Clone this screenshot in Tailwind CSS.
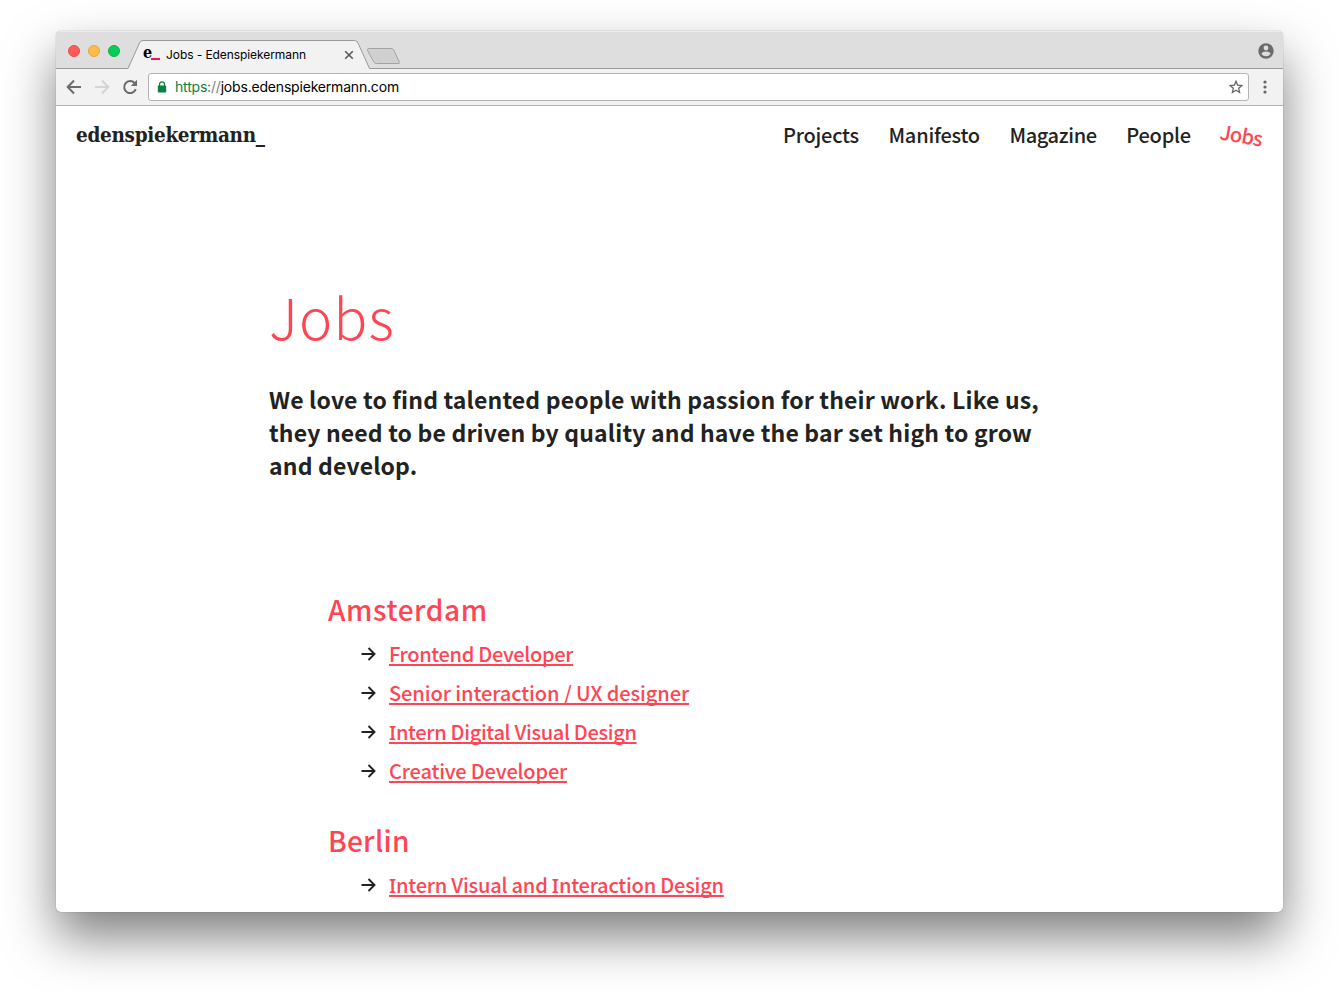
<!DOCTYPE html>
<html lang="en">
<head>
<meta charset="utf-8">
<title>Jobs - Edenspiekermann</title>
<script src="https://cdn.jsdelivr.net/npm/@tailwindcss/browser@4"></script>
</head>
<body class="h-[992px] overflow-hidden bg-white pt-[31px] pl-14">
<div class="flex h-[881px] w-[1227px] flex-col overflow-hidden rounded-[5px] bg-white shadow-[0_0_1px_rgba(0,0,0,0.55),0_25px_50px_rgba(0,0,0,0.5)]">
  <!-- Tab strip -->
  <div class="relative flex h-[38px] shrink-0 items-center bg-[#dedede] pt-0.5">
    <svg class="absolute inset-0" width="1227" height="38" fill="none">
      <path d="M0 .5H1227" stroke="#ececec"/>
      <path d="M72 38L83.5 12Q84.600 9.500 87 9.500H298.500Q301 9.500 302 12L313.500 38Z" fill="#f2f2f2"/>
      <path d="M0 37.500H72L83.500 12Q84.600 9.500 87 9.500H298.500Q301 9.500 302 12L313.500 37.500H1227" stroke="#999"/>
      <path d="M313 17.500H335Q337 17.500 338 19.500L343.500 31.500Q344 32.500 342 32.500H320.500Q318.500 32.500 317.500 30.500L311.500 19.500Q311 17.500 313 17.500Z" fill="#d0d0d0" stroke="#a3a3a3"/>
    </svg>
    <div class="relative flex gap-2 pl-3">
      <i class="size-3 rounded-full border border-[#e94b48] bg-[#fc5b57]"></i>
      <i class="size-3 rounded-full border border-[#e8a53c] bg-[#fdbc4a]"></i>
      <i class="size-3 rounded-full border border-[#06b34a] bg-[#05cd57]"></i>
    </div>
    <div class="relative ml-[23px] flex h-5 w-[17px] items-center pt-1 text-[16px] leading-5 font-bold text-black" style="font-family:'DejaVu Serif Condensed','DejaVu Serif',serif"><span class="w-2 shrink-0">e</span><span class="mt-[12px] h-[2px] w-[9px] shrink-0 bg-[#f0145a]"></span></div>
    <div class="relative mt-[7px] ml-[6px] w-[178px] text-[12px] tracking-[-0.08px] whitespace-nowrap text-black" style="font-family:Inter,sans-serif">Jobs - Edenspiekermann</div>
    <svg class="relative mt-[7px]" width="10" height="10" stroke="#5a5a5a" stroke-width="1.6"><path d="M1.200 1.200L8.800 8.800M8.800 1.200L1.200 8.800"/></svg>
    <svg class="relative mr-[9px] ml-auto" width="16" height="16"><circle cx="8" cy="8" r="7.700" fill="#6b6b6b"/><circle cx="8" cy="5" r="2.400" fill="#dedede"/><path d="M3.300 10.700Q4.500 8.600 8 8.600T12.700 10.700Q11 13.300 8 13.300T3.300 10.700Z" fill="#dedede"/></svg>
  </div>
  <!-- Toolbar -->
  <div class="flex h-[37px] shrink-0 items-center border-b border-[#b4b4b4] bg-[#f2f2f2]">
    <svg class="ml-[10px]" width="16" height="16" fill="none" stroke="#6b6b6b" stroke-width="2"><path d="M15 8H2M8 1.500L1.700 8L8 14.500"/></svg>
    <svg class="ml-3" width="16" height="16" fill="none" stroke="#d4d4d4" stroke-width="2"><path d="M1 8H14M8 1.500L14.300 8L8 14.500"/></svg>
    <svg class="ml-3" width="16" height="16" fill="none" stroke="#6b6b6b" stroke-width="2"><path d="M13.800 10.200A6 6 0 1 1 12.600 4"/><path d="M15 .8V7H8.800Z" fill="#6b6b6b" stroke="none"/></svg>
    <div class="ml-[10px] flex h-7 w-[1101px] items-center rounded-[3px] border border-[#b4b4b4] bg-white">
      <svg class="ml-[8px]" width="10" height="12" viewBox="0 0 10 12"><rect x=".8" y="4.500" width="8.400" height="7" rx=".8" fill="#0b8043"/><path d="M2.600 5V3.200a2.400 2.400 0 0 1 4.800 0V5" fill="none" stroke="#0b8043" stroke-width="1.300"/></svg>
      <div class="ml-[8px] text-[14px] leading-5 tracking-[-0.19px] whitespace-nowrap text-black" style="font-family:Inter,sans-serif"><span class="text-[#0b8043]">https:</span><span class="text-[#808080]">//</span>jobs.edenspiekermann.com</div>
      <svg class="mr-[5px] ml-auto" width="14" height="14" viewBox="0 0 14 14" fill="none" stroke="#666" stroke-width="1.300"><path d="M7 1.300L8.600 5.100L12.900 5.500L9.700 8.300L10.600 12.500L7 10.300L3.400 12.500L4.300 8.300L1.100 5.500L5.400 5.100Z"/></svg>
    </div>
    <svg class="ml-[14px]" width="4" height="14" fill="#666"><circle cx="2" cy="2" r="1.600"/><circle cx="2" cy="7" r="1.600"/><circle cx="2" cy="12" r="1.600"/></svg>
  </div>
  <!-- Page -->
  <div class="flex-1 text-[#222]" style="font-family:'Noto Sans CJK SC',sans-serif">
    <header class="flex h-[58px] items-center justify-between pr-5 pl-5">
      <a class="text-[20.5px] leading-6 font-bold" style="font-family:'DejaVu Serif Condensed','DejaVu Serif',serif"><span class="tracking-[-0.3px]">edenspiekermann_</span></a>
      <nav class="flex gap-[29.5px] text-[20px] leading-7 font-medium tracking-[-0.22px]">
        <a>Projects</a><a>Manifesto</a><a class="tracking-[-0.35px]">Magazine</a><a>People</a><a class="rotate-[10deg] tracking-[-0.7px] text-[#ff4553]">Jobs</a>
      </nav>
    </header>
    <main class="pl-[213px]">
      <h1 class="mt-[117px] text-[56px] leading-[70px] font-light tracking-[1.2px] text-[#ff4553]">Jobs</h1>
      <p class="mt-[32px] text-[23px] leading-[33px] font-bold tracking-[0.16px] whitespace-nowrap">We love to find talented people with passion for their work. Like us,<br>they need to be driven by quality and have the bar set high to grow<br>and develop.</p>
      <section class="mt-[109px] pl-[59px]">
        <h2 class="text-[28px] leading-9 font-medium tracking-[0.6px] text-[#ff4553]">Amsterdam</h2>
        <ul class="mt-[7px] ml-[33px] text-[20px] leading-[39px] font-medium text-[#ff4553]">
          <li class="flex h-[39px] items-center gap-[13px]"><svg class="text-[#222]" width="15" height="14" fill="none" stroke="currentColor" stroke-width="1.900"><path d="M.5 7H13.500M7.500 1L13.500 7L7.500 13"/></svg><a class="tracking-[-0.32px] underline decoration-2 underline-offset-[2px] [text-decoration-skip-ink:none]">Frontend Developer</a></li>
          <li class="flex h-[39px] items-center gap-[13px]"><svg class="text-[#222]" width="15" height="14" fill="none" stroke="currentColor" stroke-width="1.900"><path d="M.5 7H13.500M7.500 1L13.500 7L7.500 13"/></svg><a class="tracking-[-0.06px] underline decoration-2 underline-offset-[2px] [text-decoration-skip-ink:none]">Senior interaction / UX designer</a></li>
          <li class="flex h-[39px] items-center gap-[13px]"><svg class="text-[#222]" width="15" height="14" fill="none" stroke="currentColor" stroke-width="1.900"><path d="M.5 7H13.500M7.500 1L13.500 7L7.500 13"/></svg><a class="tracking-[-0.32px] underline decoration-2 underline-offset-[2px] [text-decoration-skip-ink:none]"><span style="font-family:'Open Sans';font-weight:600;font-feature-settings:'ss01','salt'">I</span>ntern Digital Visual Design</a></li>
          <li class="flex h-[39px] items-center gap-[13px]"><svg class="text-[#222]" width="15" height="14" fill="none" stroke="currentColor" stroke-width="1.900"><path d="M.5 7H13.500M7.500 1L13.500 7L7.500 13"/></svg><a class="tracking-[-0.17px] underline decoration-2 underline-offset-[2px] [text-decoration-skip-ink:none]">Creative Developer</a></li>
        </ul>
        <h2 class="mt-[32px] text-[28px] leading-9 font-medium tracking-[0.3px] text-[#ff4553]">Berlin</h2>
        <ul class="mt-[7px] ml-[33px] text-[20px] leading-[39px] font-medium text-[#ff4553]">
          <li class="flex h-[39px] items-center gap-[13px]"><svg class="text-[#222]" width="15" height="14" fill="none" stroke="currentColor" stroke-width="1.900"><path d="M.5 7H13.500M7.500 1L13.500 7L7.500 13"/></svg><a class="tracking-[-0.2px] underline decoration-2 underline-offset-[2px] [text-decoration-skip-ink:none]"><span style="font-family:'Open Sans';font-weight:600;font-feature-settings:'ss01','salt'">I</span>ntern Visual and <span style="font-family:'Open Sans';font-weight:600;font-feature-settings:'ss01','salt'">I</span>nteraction Design</a></li>
        </ul>
      </section>
    </main>
  </div>
</div>
</body>
</html>
